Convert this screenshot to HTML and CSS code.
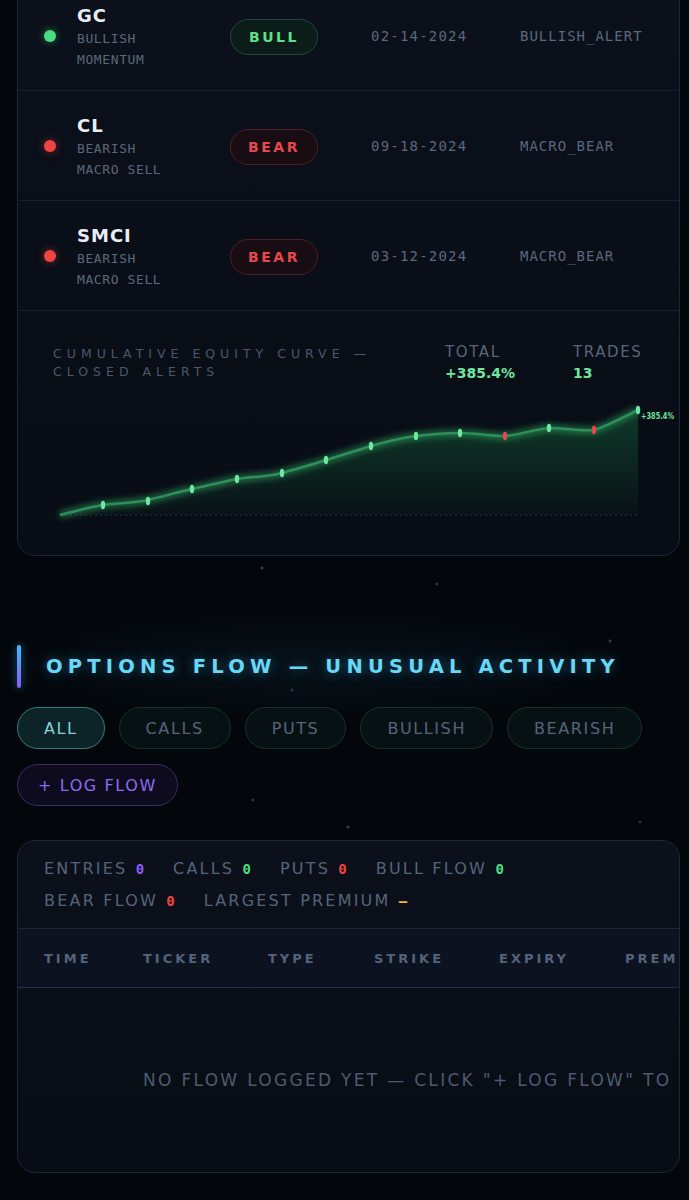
FILE: index.html
```html
<!DOCTYPE html>
<html lang="en">
<head>
    <meta charset="UTF-8">
    <meta name="viewport" content="width=device-width, initial-scale=1.0">
    <title>Alerts &amp; Options Flow</title>
    <link rel="stylesheet" href="styles.css">
</head>
<body>
    <div class="page">
        <section class="card alerts">
            <div class="alert-row">
                <span class="dot bull"></span>
                <div class="alert-name">
                    <div class="ticker">GC</div>
                    <div class="sub">BULLISH<br>MOMENTUM</div>
                </div>
                <div><span class="badge bull">BULL</span></div>
                <div class="date">02-14-2024</div>
                <div class="tag">BULLISH_ALERT</div>
            </div>
            <div class="alert-row">
                <span class="dot bear"></span>
                <div class="alert-name">
                    <div class="ticker">CL</div>
                    <div class="sub">BEARISH<br>MACRO SELL</div>
                </div>
                <div><span class="badge bear">BEAR</span></div>
                <div class="date">09-18-2024</div>
                <div class="tag">MACRO_BEAR</div>
            </div>
            <div class="alert-row">
                <span class="dot bear"></span>
                <div class="alert-name">
                    <div class="ticker">SMCI</div>
                    <div class="sub">BEARISH<br>MACRO SELL</div>
                </div>
                <div><span class="badge bear">BEAR</span></div>
                <div class="date">03-12-2024</div>
                <div class="tag">MACRO_BEAR</div>
            </div>

            <div class="equity">
                <div class="equity-head">
                    <div class="equity-title">CUMULATIVE EQUITY CURVE — CLOSED ALERTS</div>
                    <div class="stat">
                        <div class="stat-label">TOTAL</div>
                        <div class="stat-value">+385.4%</div>
                    </div>
                    <div class="stat">
                        <div class="stat-label">TRADES</div>
                        <div class="stat-value">13</div>
                    </div>
                </div>
                <!-- chart uses page coordinates in its viewBox -->
                <svg class="equity-chart" viewBox="18 390 661 140" width="661" height="140">
                    <defs>
                        <linearGradient id="areaFill" x1="0" y1="0" x2="0" y2="1">
                            <stop offset="0" stop-color="#22c55e" stop-opacity="0.24"/>
                            <stop offset="1" stop-color="#22c55e" stop-opacity="0.03"/>
                        </linearGradient>
                        <filter id="glow" x="-10%" y="-50%" width="120%" height="200%">
                            <feGaussianBlur stdDeviation="3"/>
                        </filter>
                    </defs>
                    <line x1="60" y1="515" x2="638" y2="515" stroke="#26323f" stroke-width="1" stroke-dasharray="2 3"/>
                    <path d="M60 515 C80 510 90 507 103 505 C120 503 135 503 148 500 C165 496 178 492 192 489 C210 485 222 482 237 479 C255 476 268 477 282 473 C298 468 312 465 326 460 C342 455 355 451 371 446 C388 441 400 438 416 436 C432 434 445 433 460 433 C475 433 490 436 505 436 C520 435 535 429 549 428 C565 428 580 431 594 430 C610 425 625 416 638 410 L638 515 L60 515 Z" fill="url(#areaFill)"/>
                    <path d="M60 515 C80 510 90 507 103 505 C120 503 135 503 148 500 C165 496 178 492 192 489 C210 485 222 482 237 479 C255 476 268 477 282 473 C298 468 312 465 326 460 C342 455 355 451 371 446 C388 441 400 438 416 436 C432 434 445 433 460 433 C475 433 490 436 505 436 C520 435 535 429 549 428 C565 428 580 431 594 430 C610 425 625 416 638 410" fill="none" stroke="#2fae68" stroke-width="7" stroke-opacity="0.55" filter="url(#glow)"/>
                    <path d="M60 515 C80 510 90 507 103 505 C120 503 135 503 148 500 C165 496 178 492 192 489 C210 485 222 482 237 479 C255 476 268 477 282 473 C298 468 312 465 326 460 C342 455 355 451 371 446 C388 441 400 438 416 436 C432 434 445 433 460 433 C475 433 490 436 505 436 C520 435 535 429 549 428 C565 428 580 431 594 430 C610 425 625 416 638 410" fill="none" stroke="#2f8f5c" stroke-width="2.5"/>
                    <g fill="#6ee7a0">
                        <ellipse cx="103" cy="505" rx="2.2" ry="4.2"/>
                        <ellipse cx="148" cy="501" rx="2.2" ry="4.2"/>
                        <ellipse cx="192" cy="489" rx="2.2" ry="4.2"/>
                        <ellipse cx="237" cy="479" rx="2.2" ry="4.2"/>
                        <ellipse cx="282" cy="473" rx="2.2" ry="4.2"/>
                        <ellipse cx="326" cy="460" rx="2.2" ry="4.2"/>
                        <ellipse cx="371" cy="446" rx="2.2" ry="4.2"/>
                        <ellipse cx="416" cy="436" rx="2.2" ry="4.2"/>
                        <ellipse cx="460" cy="433" rx="2.2" ry="4.2"/>
                        <ellipse cx="549" cy="428" rx="2.2" ry="4.2"/>
                        <ellipse cx="638" cy="410" rx="2.2" ry="4.2"/>
                    </g>
                    <g fill="#e5484d">
                        <ellipse cx="505" cy="436" rx="2.2" ry="4.2"/>
                        <ellipse cx="594" cy="430" rx="2.2" ry="4.2"/>
                    </g>
                    <text class="chart-label" x="641" y="419" textLength="33" lengthAdjust="spacingAndGlyphs">+385.4%</text>
                </svg>
            </div>
        </section>

        <h2 class="section-title">OPTIONS FLOW — UNUSUAL ACTIVITY</h2>

        <div class="filters">
            <button class="chip active">ALL</button>
            <button class="chip">CALLS</button>
            <button class="chip">PUTS</button>
            <button class="chip">BULLISH</button>
            <button class="chip">BEARISH</button>
            <button class="chip log">+ LOG FLOW</button>
        </div>

        <section class="card flow">
            <div class="flow-stats">
                <span class="stat-item">ENTRIES <b class="num purple">0</b></span>
                <span class="stat-item">CALLS <b class="num green">0</b></span>
                <span class="stat-item">PUTS <b class="num red">0</b></span>
                <span class="stat-item">BULL FLOW <b class="num green">0</b></span>
                <span class="stat-item">BEAR FLOW <b class="num red">0</b></span>
                <span class="stat-item">LARGEST PREMIUM <b class="num yellow">—</b></span>
            </div>
            <div class="flow-table">
                <div class="flow-head">
                    <span>TIME</span>
                    <span>TICKER</span>
                    <span>TYPE</span>
                    <span>STRIKE</span>
                    <span>EXPIRY</span>
                    <span>PREMIUM</span>
                    <span>SIZE</span>
                    <span>SENTIMENT</span>
                </div>
                <div class="flow-empty">NO FLOW LOGGED YET — CLICK "+ LOG FLOW" TO ADD YOUR FIRST ENTRY</div>
            </div>
        </section>
    </div>
</body>
</html>
```

FILE: styles.css
```css
body {
    margin: 0;
    padding: 0;
    background-color: #03060a;
    background-image:
        radial-gradient(circle at 262px 568px, #2a3a48 1px, transparent 2px),
        radial-gradient(circle at 437px 584px, #243240 1px, transparent 2px),
        radial-gradient(circle at 610px 641px, #2a3a48 1px, transparent 2px),
        radial-gradient(circle at 292px 690px, #22303c 1px, transparent 2px),
        radial-gradient(circle at 348px 827px, #2a3a48 1px, transparent 2px),
        radial-gradient(circle at 253px 800px, #22303c 1px, transparent 2px),
        radial-gradient(circle at 640px 822px, #22303c 1px, transparent 2px),
        radial-gradient(ellipse 360px 60px at 320px 665px, rgba(40, 120, 160, 0.10), transparent);
    background-repeat: no-repeat;
    color: #e8eef5;
    font-family: "DejaVu Sans", sans-serif;
    overflow: hidden;
}
.page {
    padding: 0 9px 60px 17px;
}
.card {
    background: linear-gradient(180deg, #0b101b 0%, #080c14 100%);
    border: 1px solid #17293a;
    border-radius: 18px;
    overflow: hidden;
}
.alerts {
    margin-top: -20px;
}

/* alert rows */
.alert-row {
    display: grid;
    grid-template-columns: 12px 174px 141px 149px 1fr;
    align-items: center;
    height: 109px;
    padding-left: 26px;
    border-bottom: 1px solid #132230;
}
.dot {
    width: 12px;
    height: 12px;
    border-radius: 50%;
}
.dot.bull {
    background: #4ade80;
    box-shadow: 0 0 8px rgba(74, 222, 128, 0.5);
}
.dot.bear {
    background: #ef4444;
    box-shadow: 0 0 8px rgba(239, 68, 68, 0.5);
}
.alert-name {
    margin-left: 21px;
    margin-top: 2px;
}
.ticker {
    font-size: 18px;
    font-weight: bold;
    letter-spacing: 1px;
    color: #e6edf5;
    line-height: 25px;
}
.sub {
    font-family: "DejaVu Sans Mono", monospace;
    font-size: 13px;
    letter-spacing: 0.6px;
    line-height: 21px;
    color: #5b687c;
}
.badge {
    display: inline-block;
    width: 88px;
    height: 36px;
    box-sizing: border-box;
    border-radius: 18px;
    text-align: center;
    line-height: 34px;
    font-size: 14px;
    font-weight: bold;
    letter-spacing: 2.5px;
    margin-top: 3px;
}
.badge.bull {
    color: #5ee08c;
    background: #0c1c19;
    border: 1px solid #1d4a3b;
}
.badge.bear {
    color: #e5484d;
    background: #170d12;
    border: 1px solid #4e1f25;
}
.date,
.tag {
    font-family: "DejaVu Sans Mono", monospace;
    font-size: 14px;
    letter-spacing: 1.2px;
    color: #5b687c;
    margin-top: 1px;
}
.tag {
    letter-spacing: 1px;
}

/* equity curve */
.equity {
    padding: 34px 0 25px 0;
}
.equity-head {
    display: grid;
    grid-template-columns: 392px 128px 1fr;
    padding-left: 35px;
    height: 36px;
    margin-bottom: 9px;
}
.equity-title {
    font-size: 12.5px;
    letter-spacing: 5px;
    line-height: 18px;
    color: #4b586c;
    padding-right: 20px;
}
.stat-label {
    font-size: 15px;
    letter-spacing: 1.6px;
    line-height: 18px;
    color: #58667c;
    margin-top: -2px;
}
.stat-value {
    font-size: 14px;
    font-weight: bold;
    line-height: 24px;
    color: #6ee7a0;
}
.equity-chart {
    display: block;
}
.chart-label {
    font-family: "DejaVu Sans Condensed", sans-serif;
    font-size: 9px;
    font-weight: bold;
    fill: #6ee7a0;
}

/* options flow */
.section-title {
    display: flex;
    align-items: center;
    gap: 25px;
    margin: 89px 0 0 0;
    height: 43px;
    font-size: 19.5px;
    font-weight: bold;
    letter-spacing: 5.2px;
    white-space: nowrap;
    color: #67d8f5;
    text-shadow: 0 0 12px rgba(56, 189, 248, 0.45);
}
.section-title::before {
    content: "";
    flex: none;
    width: 4px;
    height: 43px;
    border-radius: 2px;
    background: linear-gradient(180deg, #38bdf8, #8b5cf6);
    box-shadow: 0 0 8px rgba(56, 189, 248, 0.5);
}
.filters {
    display: flex;
    flex-wrap: wrap;
    gap: 15px 14px;
    margin-top: 19px;
}
.chip {
    height: 42px;
    padding: 0 26px;
    border-radius: 21px;
    border: 1px solid #163034;
    background: #071114;
    color: #56647a;
    font-family: "DejaVu Sans", sans-serif;
    font-size: 16px;
    letter-spacing: 1.6px;
}
.chip.active {
    border-color: #2f7f82;
    background: #0c2328;
    color: #86d5dd;
}
.chip.log {
    padding: 0 20px;
    border-color: #3a2c66;
    background: #0e0b1e;
    color: #8b6cf0;
}
.flow {
    margin-top: 34px;
}
.flow-stats {
    display: flex;
    flex-wrap: wrap;
    column-gap: 29px;
    padding: 12px 26px 11px 26px;
    line-height: 31px;
    font-size: 16px;
    letter-spacing: 2.2px;
    color: #56647a;
    border-bottom: 1px solid #1a2638;
}
.num {
    font-family: "DejaVu Sans Mono", monospace;
    font-size: 14px;
    margin-left: 1px;
    letter-spacing: 0;
}
.num.purple { color: #8b5cf6; }
.num.green { color: #4ade80; }
.num.red { color: #ef4444; }
.num.yellow { color: #f5b731; }
.flow-table {
    width: 1100px;
}
.flow-head {
    display: grid;
    grid-template-columns: 99px 125px 106px 125px 126px 140px 110px 1fr;
    align-items: center;
    height: 58px;
    padding-left: 26px;
    background: #0c1220;
    border-bottom: 1px solid #262b52;
    font-size: 13px;
    font-weight: bold;
    letter-spacing: 3px;
    color: #55637a;
}
.flow-empty {
    height: 184px;
    line-height: 184px;
    padding-left: 125px;
    white-space: nowrap;
    font-size: 17px;
    letter-spacing: 2.3px;
    color: #4d5b70;
}
```
